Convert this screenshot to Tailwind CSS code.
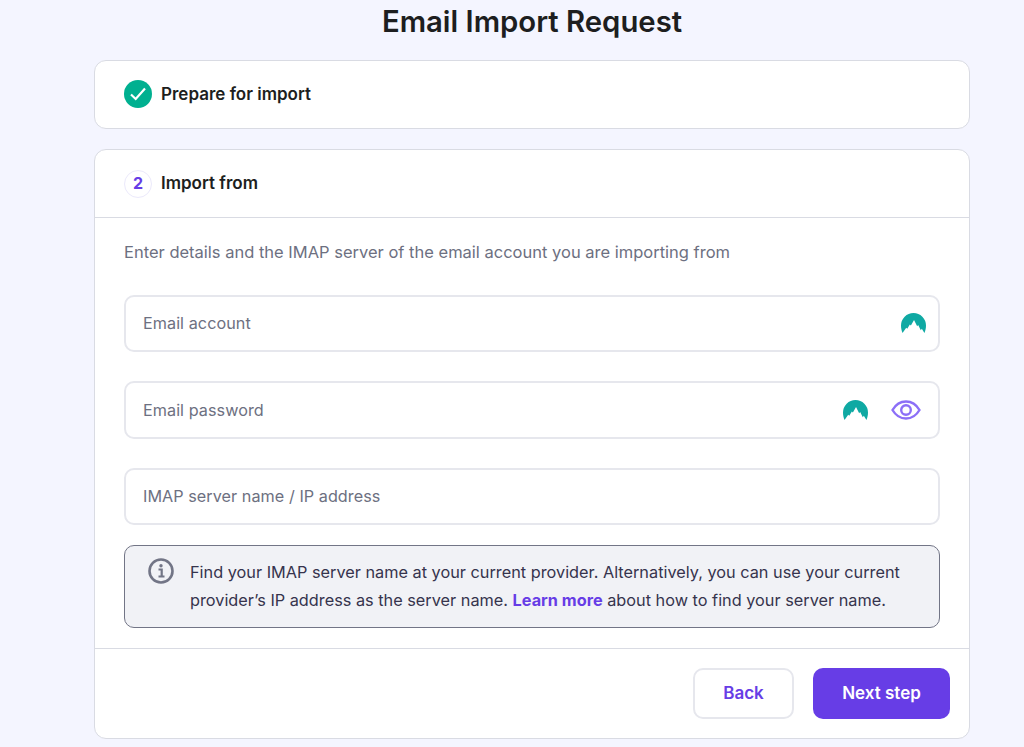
<!doctype html>
<html><head><meta charset="utf-8"><script src="https://cdn.jsdelivr.net/npm/@tailwindcss/browser@4"></script></head>
<body class="bg-[#f4f5ff] font-['Inter','Noto_Sans',sans-serif] text-[#1d1e20] h-[747px] overflow-hidden">
<div class="ml-[94px] w-[876px]">
<h1 class="h-[60px] pb-[17px] flex items-center justify-center text-[29.3px] font-semibold leading-none">Email Import Request</h1>
<section class="h-[69px] bg-white border border-[#d9dbe3] rounded-[12px] px-[29px] flex items-center gap-[9px]">
<svg width="28" height="28" viewBox="0 0 28 28" class="shrink-0 mb-[1px]"><circle cx="14" cy="14" r="14" fill="#00b090"/><path d="M7 14.500l4.700 4.500L21 8.500" fill="none" stroke="#fff" stroke-width="2.200"/></svg>
<span class="text-[17px] font-semibold">Prepare for import</span>
</section>
<section class="mt-[20px] h-[590px] bg-white border border-[#d9dbe3] rounded-[12px] flex flex-col">
<div class="h-[68px] border-b border-[#d9dbe3] px-[29px] flex items-center gap-[9px]">
<span class="w-[28px] h-[28px] rounded-full border border-[#ebe9fb] flex items-center justify-center pb-[1px] text-[#673de6] text-[16px] font-bold">2</span>
<span class="text-[17px] font-semibold">Import from</span>
</div>
<div class="flex-1 px-[29px] pt-[24px]">
<p class="text-[16.5px] leading-[20px] text-[#6d7081]">Enter details and the IMAP server of the email account you are importing from</p>
<div class="mt-[32.5px] flex flex-col gap-[29px]">
<div class="h-[57.5px] border-2 border-[#e6e7ed] rounded-[10px] pl-[17px] pr-[12px] flex items-center justify-between text-[16.2px] tracking-[0.05px] text-[#6d7081]"><span>Email account</span>
<svg width="25" height="20" viewBox="0 0 24 19"><path d="M1.500 19C.5 17 0 14.500 0 12A12 12 0 0 1 24 12C24 14.500 23.500 17 22.500 19L20 15 19 16.500 16.500 11.500 15.500 12.500 12.500 6.500 9.500 12 8.500 11 6 15 5 14z" fill="#0fa9a3"/></svg></div>
<div class="h-[57.5px] border-2 border-[#e6e7ed] rounded-[10px] pl-[17px] pr-[17px] flex items-center text-[16.2px] tracking-[0.05px] text-[#6d7081]"><span class="flex-1">Email password</span>
<svg width="25" height="20" viewBox="0 0 24 19"><path d="M1.500 19C.5 17 0 14.500 0 12A12 12 0 0 1 24 12C24 14.500 23.500 17 22.500 19L20 15 19 16.500 16.500 11.500 15.500 12.500 12.500 6.500 9.500 12 8.500 11 6 15 5 14z" fill="#0fa9a3"/></svg>
<svg class="ml-[23px]" width="30" height="20" viewBox="0 0 30 20" fill="none" stroke="#8c6ff7" stroke-width="2.400"><path d="M1.500 10C5 4 9.500 1.500 15 1.500S25 4 28.500 10C25 16 20.500 18.500 15 18.500S5 16 1.500 10z"/><circle cx="15" cy="10" r="4.800"/></svg></div>
<div class="h-[57.5px] border-2 border-[#e6e7ed] rounded-[10px] pl-[17px] flex items-center text-[16.2px] tracking-[0.05px] text-[#6d7081]">IMAP server name / IP address</div>
</div>
<div class="mt-[19.5px] h-[83.5px] bg-[#f1f2f6] border border-[#727586] rounded-[10px] pl-[23px] pr-[18px] flex gap-[16px] text-[16.3px] leading-[28px]">
<svg class="mt-[12px] shrink-0" width="26" height="26" viewBox="0 0 26 26" fill="none"><circle cx="13" cy="13" r="11.500" stroke="#727586" stroke-width="2.600"/><path d="M10.500 11.500h3.200v6.500M10.500 18.500h6" stroke="#727586" stroke-width="2.200"/><circle cx="13" cy="7.800" r="1.700" fill="#727586"/></svg>
<p class="pt-[12px] text-[#36344d]">Find your IMAP server name at your current provider. Alternatively, you can use your current provider’s IP address as the server name. <b class="font-bold text-[#673de6]">Learn more</b> about how to find your server name.</p>
</div>
</div>
<div class="h-[90px] border-t border-[#d9dbe3] pt-[19px] pr-[19px] flex justify-end gap-[19px]">
<button class="w-[101px] h-[51px] rounded-[10px] border-2 border-[#e6e7ed] text-[#673de6] text-[17px] font-semibold">Back</button>
<button class="w-[137px] h-[51px] rounded-[10px] bg-[#673de6] text-white text-[17px] font-semibold">Next step</button>
</div>
</section>
</div>
</body></html>
